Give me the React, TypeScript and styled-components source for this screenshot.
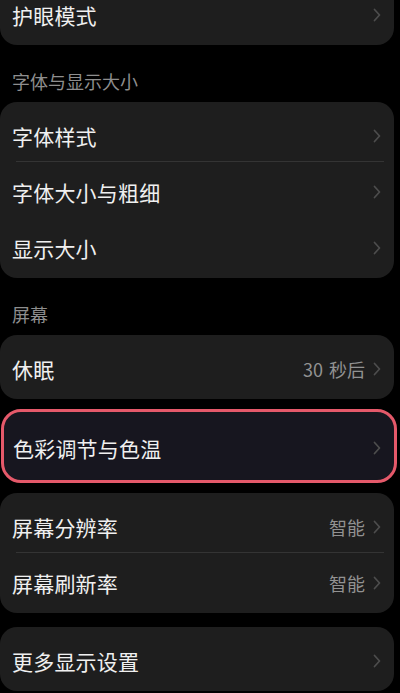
import React from "react";
import styled, { createGlobalStyle } from "styled-components";

const Global = createGlobalStyle`
  html, body {
    margin: 0;
    padding: 0;
    background: #000;
  }
  body {
    font-family: "Noto Sans CJK SC", "Noto Sans", sans-serif;
    overflow: hidden;
  }
`;

const Page = styled.div`
  width: 400px;
  height: 693px;
  overflow: hidden;
  background: #000;
`;

const List = styled.div`
  width: 394px;
  display: flex;
  flex-direction: column;
`;

const Card = styled.div<{ $top?: number }>`
  background: #1e1e1e;
  border-radius: 17px;
  padding: 4px 0;
  margin-top: ${(p) => p.$top ?? 0}px;
  display: flex;
  flex-direction: column;
`;

const HighlightCard = styled.div<{ $top?: number }>`
  margin-top: ${(p) => p.$top ?? 0}px;
  margin-right: -3px;
  margin-left: 1px;
  border: 3px solid #e5596a;
  border-radius: 20px;
  background: #17161f;
  height: 74px;
  box-sizing: border-box;
  display: flex;
  flex-direction: column;
  justify-content: center;
`;

const Row = styled.div<{ $divider?: boolean; $inset?: number }>`
  position: relative;
  height: 56px;
  box-sizing: border-box;
  padding: 4px 13px 0 ${(p) => p.$inset ?? 12}px;
  display: flex;
  align-items: center;
  justify-content: space-between;
  ${(p) =>
    p.$divider
      ? `&::after {
    content: "";
    position: absolute;
    left: 16px;
    right: 10px;
    bottom: 0;
    height: 1px;
    background: #343434;
  }`
      : ""}
`;

const Label = styled.span`
  color: #f0f0f0;
  font-size: 21px;
  font-weight: 400;
  line-height: 24px;
  letter-spacing: 0.2px;
`;

const Trail = styled.span`
  display: flex;
  align-items: center;
  gap: 8px;
`;

const Value = styled.span`
  color: #929292;
  font-size: 18px;
  line-height: 20px;
  word-spacing: 2px;
`;

const Header = styled.div`
  color: #8e8e8e;
  font-size: 18px;
  line-height: 20px;
  padding: 26px 12px 11px;
`;

const Chevron = () => (
  <svg width="8" height="14" viewBox="0 0 8 14">
    <polyline
      points="1.5,1.5 6.5,7 1.5,12.5"
      fill="none"
      stroke="#4d4d4d"
      strokeWidth="1.7"
      strokeLinecap="round"
      strokeLinejoin="round"
    />
  </svg>
);

type ItemProps = { label: string; value?: string; divider?: boolean; inset?: number };

const Item = ({ label, value, divider, inset }: ItemProps) => (
  <Row $divider={divider} $inset={inset}>
    <Label>{label}</Label>
    <Trail>
      {value && <Value>{value}</Value>}
      <Chevron />
    </Trail>
  </Row>
);

export default function App() {
  return (
    <Page>
      <Global />
      <List>
        <Card $top={-19}>
          <Item label="护眼模式" />
        </Card>
        <Header>字体与显示大小</Header>
        <Card>
          <Item label="字体样式" divider />
          <Item label="字体大小与粗细" />
          <Item label="显示大小" />
        </Card>
        <Header>屏幕</Header>
        <Card>
          <Item label="休眠" value="30 秒后" />
        </Card>
        <HighlightCard $top={10}>
          <Item label="色彩调节与色温" inset={9} />
        </HighlightCard>
        <Card $top={10}>
          <Item label="屏幕分辨率" value="智能" divider />
          <Item label="屏幕刷新率" value="智能" />
        </Card>
        <Card $top={14}>
          <Item label="更多显示设置" />
        </Card>
      </List>
    </Page>
  );
}
